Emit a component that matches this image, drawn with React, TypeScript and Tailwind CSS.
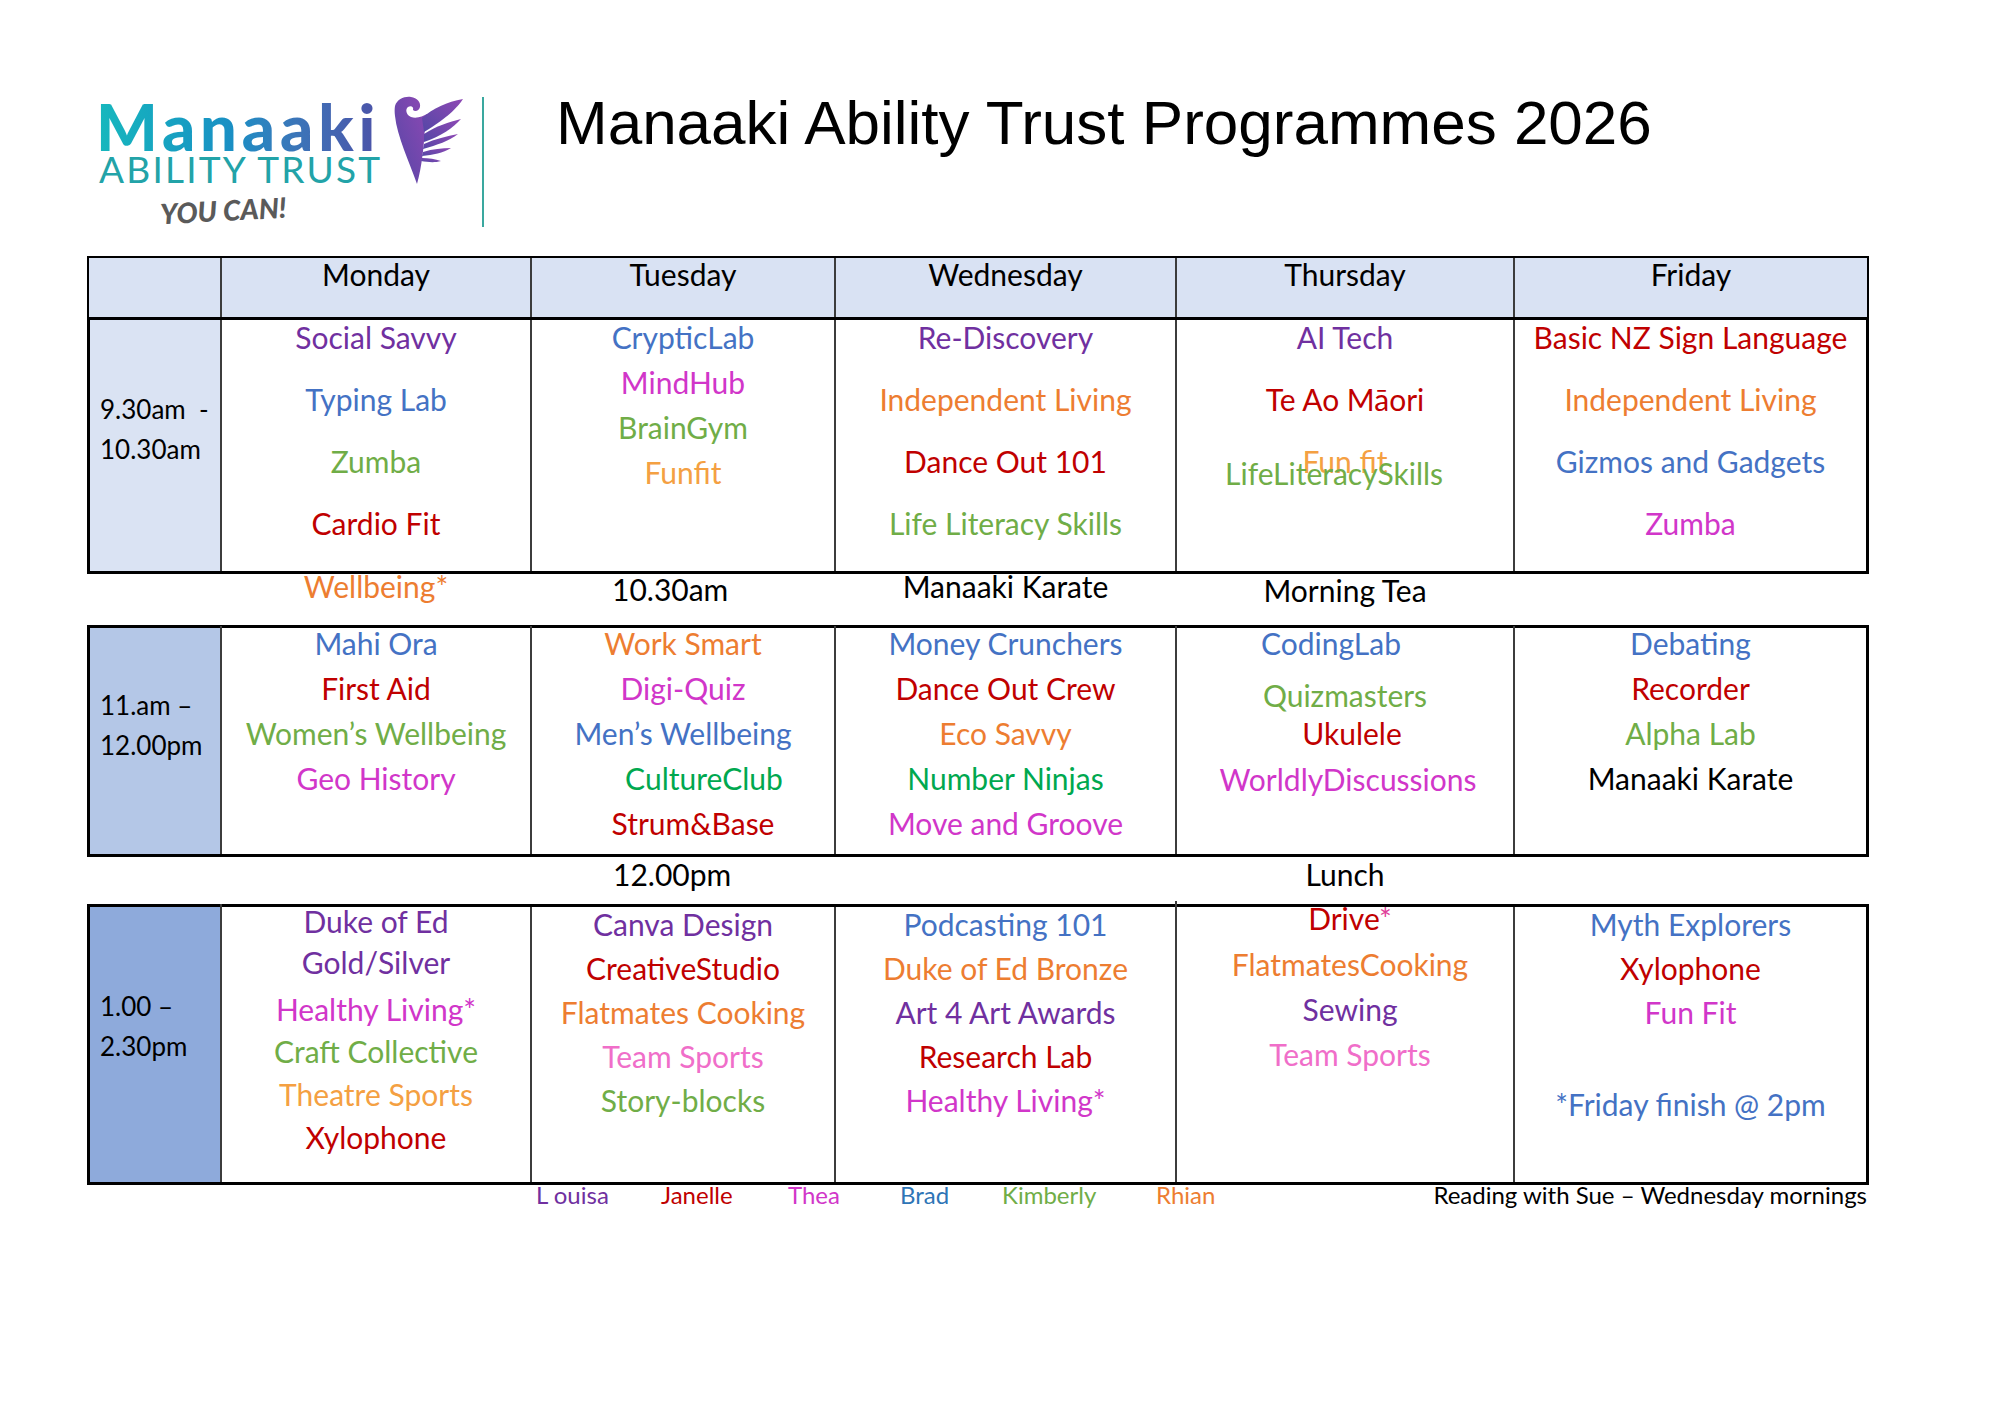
import React from "react";

type Item = { t: React.ReactNode; c: string; m?: string };
type Cell = { pad: string; gap: string; items: Item[] };

const purple = "text-[#7030a0]";
const blue = "text-[#4472c4]";
const green = "text-[#70ad47]";
const red = "text-[#c00000]";
const orange = "text-[#ed7d31]";
const lightOrange = "text-[#f4a042]";
const magenta = "text-[#d136c9]";
const pink = "text-[#f06ec9]";
const brightGreen = "text-[#00a84f]";
const black = "text-black";

const row1: Cell[] = [
  {
    pad: "pt-0",
    gap: "gap-[28px]",
    items: [
      { t: "Social Savvy", c: purple },
      { t: "Typing Lab", c: blue },
      { t: "Zumba", c: green },
      { t: "Cardio Fit", c: red },
    ],
  },
  {
    pad: "pt-0",
    gap: "gap-[11px]",
    items: [
      { t: "CrypticLab", c: blue },
      { t: "MindHub", c: magenta },
      { t: "BrainGym", c: green },
      { t: "Funfit", c: lightOrange },
    ],
  },
  {
    pad: "pt-0",
    gap: "gap-[28px]",
    items: [
      { t: "Re-Discovery", c: purple },
      { t: "Independent Living", c: orange },
      { t: "Dance Out 101", c: red },
      { t: "Life Literacy Skills", c: green },
    ],
  },
  {
    pad: "pt-0",
    gap: "gap-[28px]",
    items: [
      { t: "AI Tech", c: purple },
      { t: "Te Ao Māori", c: red },
    ],
  },
  {
    pad: "pt-0",
    gap: "gap-[28px]",
    items: [
      { t: "Basic NZ Sign Language", c: red },
      { t: "Independent Living", c: orange },
      { t: "Gizmos and Gadgets", c: blue },
      { t: "Zumba", c: magenta },
    ],
  },
];

const row2: Cell[] = [
  {
    pad: "-mt-[2px]",
    gap: "gap-[11px]",
    items: [
      { t: "Mahi Ora", c: blue },
      { t: "First Aid", c: red },
      { t: "Women’s Wellbeing", c: green },
      { t: "Geo History", c: magenta },
    ],
  },
  {
    pad: "-mt-[2px]",
    gap: "gap-[11px]",
    items: [
      { t: "Work Smart", c: orange },
      { t: "Digi-Quiz", c: magenta },
      { t: "Men’s Wellbeing", c: blue },
      { t: "CultureClub", c: brightGreen, m: "translate-x-[21px]" },
      { t: "Strum&Base", c: red, m: "translate-x-[10px]" },
    ],
  },
  {
    pad: "-mt-[2px]",
    gap: "gap-[11px]",
    items: [
      { t: "Money Crunchers", c: blue },
      { t: "Dance Out Crew", c: red },
      { t: "Eco Savvy", c: orange },
      { t: "Number Ninjas", c: brightGreen },
      { t: "Move and Groove", c: magenta },
    ],
  },
  {
    pad: "-mt-[2px]",
    gap: "gap-0",
    items: [
      { t: "CodingLab", c: blue, m: "-translate-x-[14px]" },
      { t: "Quizmasters", c: green, m: "mt-[18px]" },
      { t: "Ukulele", c: red, m: "mt-[4px] translate-x-[7px]" },
      { t: "WorldlyDiscussions", c: magenta, m: "mt-[12px] translate-x-[3px]" },
    ],
  },
  {
    pad: "-mt-[2px]",
    gap: "gap-[11px]",
    items: [
      { t: "Debating", c: blue },
      { t: "Recorder", c: red },
      { t: "Alpha Lab", c: green },
      { t: "Manaaki Karate", c: black },
    ],
  },
];

const row3: Cell[] = [
  {
    pad: "-mt-[3px]",
    gap: "gap-0",
    items: [
      { t: "Duke of Ed", c: purple },
      { t: "Gold/Silver", c: purple, m: "mt-[7px]" },
      { t: "Healthy Living*", c: magenta, m: "mt-[13px]" },
      { t: "Craft Collective", c: green, m: "mt-[8px]" },
      { t: "Theatre Sports", c: lightOrange, m: "mt-[9px]" },
      { t: "Xylophone", c: red, m: "mt-[9px]" },
    ],
  },
  {
    pad: "pt-0",
    gap: "gap-[10px]",
    items: [
      { t: "Canva Design", c: purple },
      { t: "CreativeStudio", c: red },
      { t: "Flatmates Cooking", c: orange },
      { t: "Team Sports", c: pink },
      { t: "Story-blocks", c: green },
    ],
  },
  {
    pad: "pt-0",
    gap: "gap-[10px]",
    items: [
      { t: "Podcasting 101", c: blue },
      { t: "Duke of Ed Bronze", c: orange },
      { t: "Art 4 Art Awards", c: purple },
      { t: "Research Lab", c: red },
      { t: "Healthy Living*", c: magenta },
    ],
  },
  {
    pad: "-mt-[6px]",
    gap: "gap-[11px]",
    items: [
      {
        t: (
          <>
            Drive<span className="text-[#e0409a]">*</span>
          </>
        ),
        c: red,
        m: "translate-x-[5px]",
      },
      { t: "FlatmatesCooking", c: orange, m: "mt-[1px] translate-x-[5px]" },
      { t: "Sewing", c: purple, m: "translate-x-[5px]" },
      { t: "Team Sports", c: pink, m: "translate-x-[5px]" },
    ],
  },
  {
    pad: "pt-0",
    gap: "gap-0",
    items: [
      { t: "Myth Explorers", c: blue },
      { t: "Xylophone", c: red, m: "mt-[10px]" },
      { t: "Fun Fit", c: magenta, m: "mt-[10px]" },
      { t: "*Friday finish @ 2pm", c: blue, m: "mt-[58px]" },
    ],
  },
];

const widths = ["w-[310px]", "w-[304px]", "w-[341px]", "w-[338px]", "flex-1"];

const DayCell = ({ cell, width, extra }: { cell: Cell; width: string; extra?: React.ReactNode }) => (
  <div className={`${width} border-l-2 border-[#3c3c3c] flex flex-col items-center ${cell.pad} ${cell.gap}`}>
    {cell.items.map((it, i) => (
      <div key={i} className={`leading-[34px] whitespace-nowrap ${it.c} ${it.m ?? ""}`}>
        {it.t}
      </div>
    ))}
    {extra}
  </div>
);

const BodyRow = ({
  height,
  timeBg,
  timePad,
  time,
  cells,
  thursdayExtra,
}: {
  height: string;
  timeBg: string;
  timePad: string;
  time: string[];
  cells: Cell[];
  thursdayExtra?: React.ReactNode;
}) => (
  <div className={`flex ${height} border-[3px] border-black`}>
    <div className={`w-[130px] ${timeBg} ${timePad} pl-[10px] text-[26px] leading-[40px] text-black`}>
      {time.map((t) => (
        <div key={t} className="whitespace-pre">
          {t}
        </div>
      ))}
    </div>
    {cells.map((c, i) => (
      <DayCell key={i} cell={c} width={widths[i]} extra={i === 3 ? thursdayExtra : undefined} />
    ))}
  </div>
);

const GapRow = ({ height, labels }: { height: string; labels: React.ReactNode[] }) => (
  <div className={`flex ${height} px-[3px] text-black`}>
    <div className="w-[130px]" />
    {labels.map((l, i) => (
      <div key={i} className={`${widths[i]} border-l-2 border-transparent leading-[34px]`}>
        {l}
      </div>
    ))}
  </div>
);

const Wing = () => (
  <svg width="76" height="90" viewBox="0 0 76 90" className="mt-[96px] shrink-0">
    <defs>
      <linearGradient id="wingGrad" x1="0" y1="1" x2="1" y2="0">
        <stop offset="0" stopColor="#5447a6" />
        <stop offset="1" stopColor="#8e48b4" />
      </linearGradient>
    </defs>
    {/* body with koru curl on top */}
    <path
      d="M4 10 C6 3 14 0 20 1 C26 2 30 6 29 11 C28 15 24 16 22 14 C23 11 20 9 17 11 C14 13 15 19 20 21 C26 23 32 20 36 18 L34 30 C33 50 31 70 26 88 C18 65 6 40 4 20 C3.5 16 3.5 13 4 10 Z"
      fill="url(#wingGrad)"
    />
    {/* feathers */}
    <path d="M31 22 C42 12 56 6 72 3 C66 12 56 22 33 36 Z" fill="url(#wingGrad)" />
    <path d="M33 38 C45 30 58 26 70 23 C62 32 50 40 33 46 Z" fill="url(#wingGrad)" />
    <path d="M33 48 C44 43 56 40 67 38 C58 45 46 49 32 53 Z" fill="url(#wingGrad)" />
    <path d="M32 56 C42 53 51 52 60 52 C52 57 42 59 31 60 Z" fill="url(#wingGrad)" />
    <path d="M31 62 C38 62 44 63 50 65 C43 67 37 66 30 65 Z" fill="url(#wingGrad)" />
  </svg>
);

export default function App() {
  return (
    <div className="w-[2000px] h-[1414px] bg-white font-[Lato,sans-serif] overflow-hidden">
      {/* header with logo + title */}
      <div className="flex h-[256px]">
        <div className="ml-[96px] w-[295px] pt-[100px] flex flex-col shrink-0">
          <div className="w-fit text-[65px] font-black leading-[52px] tracking-[0.075em] bg-linear-to-r from-[#17b8bd] via-[#1a8dc4] to-[#4b52a8] bg-clip-text text-transparent">
            Manaaki
          </div>
          <div className="mt-[2px] ml-[3px] text-[37px] font-normal leading-[30px] tracking-[0.06em] text-[#22a3a8] whitespace-nowrap">
            ABILITY TRUST
          </div>
          <div className="mt-[11px] ml-[64px] text-[28px] font-black italic leading-[30px] text-[#5a5a5a] -rotate-3 w-fit">
            YOU CAN!
          </div>
        </div>
        <Wing />
        <div className="ml-[15px] mt-[97px] w-[2px] h-[130px] bg-[#3aa89f] shrink-0" />
        <div className="ml-[72px] mt-[92px] text-[62px] leading-none text-black font-['Liberation_Sans',Arial,sans-serif] whitespace-nowrap">
          Manaaki Ability Trust Programmes 2026
        </div>
      </div>

      {/* timetable */}
      <div className="ml-[87px] w-[1782px] text-[30px]">
        <div className="flex h-[61px] border-t-2 border-x-2 border-black bg-[#d9e2f3] text-black">
          <div className="w-[131px]" />
          {["Monday", "Tuesday", "Wednesday", "Thursday", "Friday"].map((d, i) => (
            <div key={d} className={`${widths[i]} border-l-2 border-[#3c3c3c] text-center`}>
              <div className="-mt-[1px] leading-[34px]">{d}</div>
            </div>
          ))}
        </div>

        <BodyRow
          height="h-[257px]"
          timeBg="bg-[#dae3f3]"
          timePad="pt-[69px]"
          time={["9.30am  -", "10.30am"]}
          cells={row1}
          thursdayExtra={
            <div className="relative leading-[34px] whitespace-nowrap">
              <div className={lightOrange}>Fun fit</div>
              <div className={`absolute top-[12px] left-1/2 -translate-x-[55%] ${green}`}>LifeLiteracySkills</div>
            </div>
          }
        />

        <GapRow
          height="h-[51px]"
          labels={[
            <div className={`text-center -mt-[5px] ${orange}`}>Wellbeing*</div>,
            <div className="pl-[80px] -mt-[2px]">10.30am</div>,
            <div className="text-center -mt-[5px]">Manaaki Karate</div>,
            <div className="text-center -mt-[1px]">Morning Tea</div>,
            <div />,
          ]}
        />

        <BodyRow height="h-[232px]" timeBg="bg-[#b4c7e7]" timePad="pt-[57px]" time={["11.am –", "12.00pm"]} cells={row2} />

        <GapRow
          height="h-[47px]"
          labels={[
            <div />,
            <div className="pl-[81px]">12.00pm</div>,
            <div />,
            <div className="text-center">Lunch</div>,
            <div />,
          ]}
        />

        <BodyRow height="h-[281px]" timeBg="bg-[#8eaadb]" timePad="pt-[79px]" time={["1.00 –", "2.30pm"]} cells={row3} />

        {/* staff colour key */}
        <div className="flex -mt-[5px] text-[24px] leading-[30px] whitespace-nowrap">
          <div className="w-[449px]" />
          <div className="w-[125px] text-[#7030a0]">L ouisa</div>
          <div className="w-[127px] text-[#c00000]">Janelle</div>
          <div className="w-[112px] text-[#d136c9]">Thea</div>
          <div className="w-[102px] text-[#2e75b6]">Brad</div>
          <div className="w-[154px] text-[#70ad47]">Kimberly</div>
          <div className="text-[#ed7d31]">Rhian</div>
          <div className="ml-auto pr-[2px] text-black">Reading with Sue – Wednesday mornings</div>
        </div>
      </div>
    </div>
  );
}
